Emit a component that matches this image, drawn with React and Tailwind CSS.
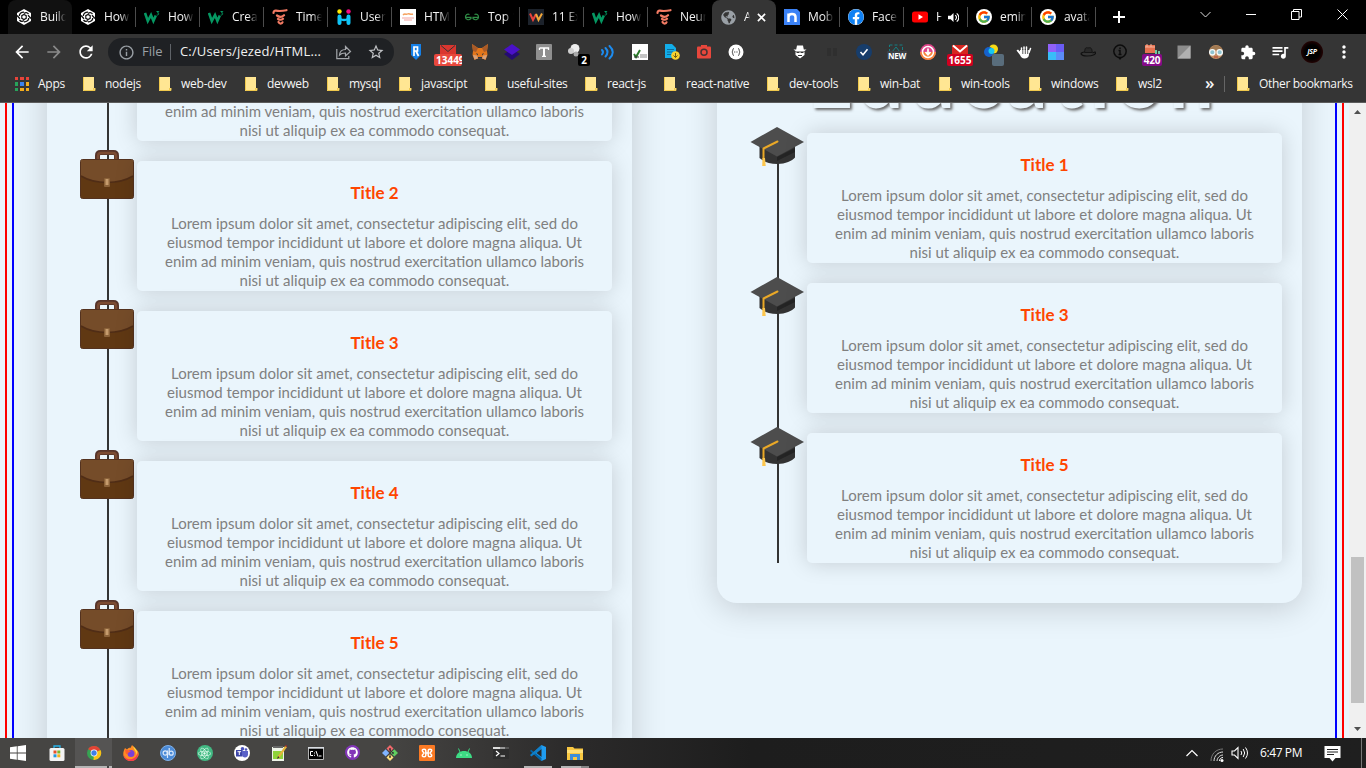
import React from "react";
import { FcGoogle } from "react-icons/fc";
import { FaReact, FaGithub, FaGlobeAmericas, FaFacebook } from "react-icons/fa";
import { MdExtension, MdQueueMusic, MdRefresh, MdMoreVert, MdArrowBack, MdArrowForward, MdInfoOutline, MdStarBorder } from "react-icons/md";

const Svg = ({ s = 16, box = 16, children, className = "" }) => (
  <svg width={s} height={s} viewBox={`0 0 ${box} ${box}`} fill="none" className={"shrink-0 " + className}>{children}</svg>
);

/* ---------- tab favicons ---------- */
const Knot = () => (
  <Svg>
    <path d="M8 0 15 4v8l-7 4-7-4V4z" fill="#fff" />
    <path d="M8 3.200C5.500 3 3.500 4.500 3.300 7M12.500 5C11 3.200 9.500 3.200 8 4.500M12.700 9c.2 2.300-2 4-4.700 3.800M3.500 11c1.500 1.800 3 1.800 4.500.5M1 6.500l3 3.200M15 9.500l-3-3.200" stroke="#111" strokeWidth="1.300" />
    <path d="M8 5.500l2.200 1.200v2.600L8 10.500 5.800 9.300V6.700z" stroke="#111" strokeWidth="1.200" />
  </Svg>
);
const W3 = () => (
  <Svg>
    <path d="M1 4l2.800 8L7 6l2.400 6 2.400-5.500" stroke="#059862" strokeWidth="2.600" />
    <path d="M12.500 2.500h2.300L13.500 4c2 0 1.500 2.300-.8 2" stroke="#059862" strokeWidth="1" />
  </Svg>
);
const Coral = () => (
  <Svg>
    <path d="M1.500 4c0-2 1-2.500 2.500-2.300 3 .5 6 .5 10.500-.5M5 6.500c2 1.500 5 1.500 7-.3M6 10c2 1 4 .8 5-.3M6.500 13c1 2 3.500 2 4 .3" stroke="#f27a63" strokeWidth="2.200" strokeLinecap="round" />
  </Svg>
);
const Hi = () => (
  <Svg>
    <circle cx="3.500" cy="2.500" r="2.200" fill="#ffe800" /><circle cx="12.500" cy="2.500" r="2.200" fill="#f5097f" />
    <path d="M3.500 7.500v6.500M12.500 7.500v6.500" stroke="#0fc3f5" strokeWidth="4" strokeLinecap="round" /><path d="M4 10c3 1.500 5 1.500 8 0" stroke="#0fc3f5" strokeWidth="2.500" />
  </Svg>
);
const Sheet = () => (
  <Svg><path d="M0 0h16v16H0z" fill="#fff" /><path d="M3 6c2-2 3 0 4.500-1s3 1 5.500 0" stroke="#f5a05c" strokeWidth="1.500" /><path d="M2 9h12M4 11h8" stroke="#f4a3a0" /></Svg>
);
const Geeks = () => (
  <Svg><path d="M5.500 5.500C3.500 4.300 1.500 5.700 1.500 8s3 4 5.500 1.500V8.300H1M10.500 5.500C12.500 4.300 14.500 5.700 14.500 8s-3 4-5.500 1.500V8.300h6" stroke="#2f8d46" strokeWidth="1.200" /></Svg>
);
const Vee = () => (
  <Svg><path d="M0 0h16v16H0z" fill="#1c222b" /><path d="M2 4.500 5 11l3-6" stroke="#e8423b" strokeWidth="2" /><path d="M8 5l2.500 6L14 4.500" stroke="#f0a63a" strokeWidth="2" /></Svg>
);
const Globe = () => <FaGlobeAmericas size={15} color="#9aa0a6" />;
const NIcon = () => (
  <Svg><path d="M0 0h13l3 3v13H0z" fill="#3b82f6" /><path d="M4.500 13V4.500M4.500 8c0-4 7-4 7 0v5" stroke="#fff" strokeWidth="2.500" /></Svg>
);
const Face = () => <span className="flex size-4 rounded-full bg-white"><FaFacebook size={16} color="#1081f3" /></span>;
const Tube = () => <Svg><rect y="2.500" width="16" height="11" rx="2.500" fill="#f00" /><path d="M6.500 5.300v5.400L11 8z" fill="#fff" /></Svg>;
const Goog = () => <span className="flex size-4 items-center justify-center rounded-full bg-white"><FcGoogle size={14} /></span>;

const tabs = [
  [Knot, "Build"], [Knot, "How"], [W3, "How"], [W3, "Crea"], [Coral, "Time"], [Hi, "User,"], [Sheet, "HTM"], [Geeks, "Top 1"],
  [Vee, "11 Ex"], [W3, "How"], [Coral, "Neur"], [Globe, "A"], [NIcon, "Mob"], [Face, "Facel"], [Tube, "H"], [Goog, "emin"], [Goog, "avata"],
];

function Tab({ i, Icon, label }) {
  const active = i === 11;
  const sound = i === 14;
  const bg = active ? "bg-[#353535]" : i === 0 ? "bg-[#111111]" : "";
  const sep = i === 0 || i === 10 || i === 11 ? "" : "border-r border-[#4c4c4c]";
  return (
    <div className={`flex h-[34px] w-16 shrink-0 items-center rounded-t-lg ${bg}`}>
      <div className={`flex h-5 w-16 items-center pl-2 ${sep}`}>
        <span className="flex w-4 justify-center"><Icon /></span>
        <span className={`ml-2 overflow-hidden whitespace-nowrap text-[12px] tracking-[-0.1px] text-[#f4f4f4] [mask-image:linear-gradient(90deg,#000_60%,transparent)] ${active || sound ? "w-[6px]" : "w-[26px]"}`}>{label}</span>
        {active && <Svg s={9} box={10} className="ml-[7px]"><path d="M1 1l8 8M9 1L1 9" stroke="#fff" strokeWidth="1.800" /></Svg>}
        {sound && <Svg s={11} box={12} className="ml-[6px]"><path d="M0 4h3l3-3v10L3 8H0z" fill="#fff" /><path d="M8 3.500c1.500 1.500 1.500 3.500 0 5M9.500 1.500c3 2.500 3 6.500 0 9" stroke="#fff" strokeWidth="1.200" /></Svg>}
      </div>
    </div>
  );
}

/* ---------- extension icons ---------- */
const Badge = ({ children, className }) => (
  <span className={`absolute top-[10px] flex h-3 items-center overflow-hidden rounded-[2px] text-[10px] font-bold leading-none text-white ${className}`}>{children}</span>
);
const Mail = ({ bg, n, w }) => (
  <>
    <Svg><path d="M0 1h16v12H0z" fill={bg} /><path d="M1 1.500l7 6 7-6" stroke={bg === "#d9362f" ? "#353535" : "#fff"} strokeWidth={bg === "#d9362f" ? 1 : 2} /></Svg>
    <Badge className={w}>{n}</Badge>
  </>
);
const exts = [
  <Svg><path d="M3 0h10v11l-5 5-5-5z" fill="#1580e8" /><path d="M6 12V3h3.500v4H6M8 7l2.500 5" stroke="#fff" strokeWidth="1.700" /></Svg>,
  <Mail bg="#d9362f" n="13449" w="-left-[6px] w-7 bg-[#e8483d] pl-[2px] text-[10.500px]" />,
  <Svg>
    <path d="M0 0l6 4h4l6-4-1 7 .5 4-2 5-3-1.500H5.500L2.500 16l-2-5L1 7z" fill="#e2761b" /><path d="M0 0l6 4-2 4-3-1zM16 0l-6 4 2 4 3-1z" fill="#a85a28" /><path d="M4 9l2 1-.5 1.500zM12 9l-2 1 .5 1.500zM6 13h4v1.500H6z" fill="#233447" /><path d="M1 11l4 .5 1 3-3.500 1zM15 11l-4 .5-1 3 3.500 1z" fill="#d7a078" />
  </Svg>,
  <Svg><path d="M8 5l8 5-8 6-8-6z" fill="#240b73" /><path d="M8 0l8 5.500L8 11 0 5.500z" fill="#4a11c9" /></Svg>,
  <Svg><rect width="16" height="16" rx="1" fill="#8f8f8f" /><path d="M3.500 4h9v2M3.500 4v2M8 4v8M6 12.300h4" stroke="#fff" strokeWidth="1.300" /><path d="M8 4v8" stroke="#fff" strokeWidth="2" /></Svg>,
  <><Svg><circle cx="7" cy="4.500" r="4.500" fill="#eee" /><circle cx="3" cy="7" r="3" fill="#d0d0d0" /><circle cx="8" cy="10" r="2.500" fill="#aaa" /></Svg><Badge className="left-[10px] w-3 justify-center bg-black">2</Badge></>,
  <Svg><path d="M2 6q2 2 0 4.500M5.500 4q4 4 0 8.500M9.500 2q6.500 6 0 12.500" stroke="#1c8cf0" strokeWidth="2" strokeLinecap="round" /></Svg>,
  <Svg><path d="M0 0h16v16H0z" fill="#fff" /><path d="M8 10h7v4H8z" fill="#c4c4c4" /><path d="M2 10l2 3 4-7" stroke="#2b7a2b" strokeWidth="2" /><path d="M2 13h5" stroke="#333" /></Svg>,
  <Svg><path d="M1 0h7l4 4v10H1z" fill="#12aeea" /><path d="M3 5.500h7M3 8h6M3 10.500h4" stroke="#0b6c9c" /><circle cx="11.500" cy="11.500" r="4.300" fill="#f8d12d" /><path d="M11.500 9v4.500m-2-2l2 2 2-2" stroke="#6d5d12" /></Svg>,
  <Svg><rect x="1" y="2.500" width="14" height="12" rx="1" fill="#e8473c" /><path d="M5 1h6v2H5z" fill="#e8473c" /><circle cx="8" cy="8.300" r="3" stroke="#463333" strokeWidth="1.500" /></Svg>,
  <Svg><circle cx="8" cy="8" r="7.500" fill="#fff" /><path d="M6 4.500c-2 0-.5 2.500-2 3.500 1.500 1 0 3.500 2 3.500M10 4.500c2 0 .5 2.500 2 3.500-1.500 1 0 3.500-2 3.500" stroke="#555" /><path d="M6 8h4" stroke="#555" strokeDasharray="1 .7" /></Svg>,
  <span />,
  <Svg><path d="M5 1.500h6l.8 4h2.700L12.500 7h-9L1.500 5.500h2.700z" fill="#fff" /><path d="M3.500 7.500h9V11L8 14.500 3.500 11z" fill="#fff" /><path d="M4.500 8.500h3M8.500 8.500h3M6 11.500h4" stroke="#333" /></Svg>,
  <Svg><path d="M3 4h4v8H3zM9 4h4v8H9z" fill="#2f2f2f" /></Svg>,
  <Svg><circle cx="8" cy="8" r="8" fill="#173d6b" /><path d="M4.500 8l2.500 2.700L11.500 5.300" stroke="#fff" strokeWidth="1.600" /></Svg>,
  <><Svg><rect x="1.500" y="1" width="13" height="8" stroke="#167f83" strokeDasharray="3 2" /><path d="M4 8l4-5 4 5" stroke="#167f83" /></Svg><span className="absolute -left-px top-[7px] bg-[#3c4146] px-px text-[8px] font-bold leading-[9px] tracking-[-0.3px] text-white">NEW</span></>,
  <Svg><circle cx="8" cy="8" r="7.900" fill="#e0458a" /><path d="M0 8a8 8 0 0 0 16 0" fill="#f7853d" /><circle cx="8" cy="8" r="5.500" stroke="#fff" strokeWidth="1.500" /><path d="M8 4.500v5.500m-2.500-2L8 10.700 10.500 8" stroke="#fff" strokeWidth="1.700" /></Svg>,
  <Mail bg="#d6251f" n="1655" w="-left-[5px] w-[26px] justify-center bg-[#d1001f]" />,
  <><Svg><circle cx="9.500" cy="5" r="4.500" fill="#f7da15" /><circle cx="5" cy="8" r="5" fill="#1662cc" /><circle cx="7.500" cy="7" r="3" fill="#17c9ef" /></Svg><span className="absolute left-2 top-[10px] size-3 rounded-[2px] bg-[#596d7c]" /></>,
  <Svg><path d="M4 6h9v4.500c0 2.500-2 4-4.500 4S5 13 4 11L.5 6.500 2 5.500l2 2z" fill="#fff" /><path d="M5.500 8V4M8 7V3M10.500 7V3M13 8.500l1.500-4" stroke="#fff" strokeWidth="1.500" strokeLinecap="round" /><path d="M6.800 5v5M9.300 5v5M11.700 5.500V10" stroke="#333" strokeWidth=".8" /></Svg>,
  <Svg><path d="M0 0h8v8H0z" fill="#9061f9" /><path d="M8 0h8v8H8z" fill="#6a5cf5" /><path d="M0 8h8v8H0z" fill="#38bdf8" /><path d="M8 8h8v8H8z" fill="#5b8cf8" /></Svg>,
  <Svg><path d="M4.500 8.500C5 3 6 3.500 8 4c2-.5 4-1 4.200 4.500z" fill="#292929" stroke="#151515" /><path d="M4 8C-1 9 1 12 7 12s10-2 8-4l-2.500 1" stroke="#111" strokeWidth="1.200" /></Svg>,
  <Svg><circle cx="8" cy="7.300" r="6.200" stroke="#0c0c0c" strokeWidth="1.500" /><path d="M5.500 13L8 16l2.500-3z" fill="#0c0c0c" /><path d="M6.500 6.500H8v4M6.500 10.500h3M8 3.500V5" stroke="#0c0c0c" strokeWidth="1.400" /></Svg>,
  <><Svg><path d="M1 1h10v8H1z" fill="#e7714f" /><path d="M1 3h10M3 0v3m4-3v3" stroke="#f7b69e" /><path d="M11 6h2v4h-2zM14 7h2v3h-2z" fill="#6cc7a1" /></Svg><Badge className="-left-[2px] w-5 justify-center bg-[#850b88] tracking-[-0.2px]">420</Badge></>,
  <Svg><path d="M1.500 1.500h13v13h-13z" fill="#8c8c8c" /><path d="M14.500 1.500v13h-13z" fill="#b1b1b1" /></Svg>,
  <Svg><circle cx="8" cy="8" r="7" fill="#c48f63" /><path d="M1.500 6C3 0 13 0 14.500 6z" fill="#a17a53" /><circle cx="4.300" cy="8.300" r="2.700" fill="#8fc4d0" stroke="#f4f7f7" strokeWidth="1.300" /><circle cx="11.700" cy="8.300" r="2.700" fill="#8fc4d0" stroke="#f4f7f7" strokeWidth="1.300" /><path d="M6 13h4" stroke="#b13e36" /></Svg>,
  <MdExtension size={17} color="#fff" />,
  <MdQueueMusic size={20} color="#fff" className="shrink-0" />,
  <span className="flex size-[22px] shrink-0 items-center justify-center rounded-full bg-[radial-gradient(circle,#000_45%,#4a0606)] text-[7px] font-bold italic tracking-[-0.3px] text-white">JSP</span>,
  <MdMoreVert size={20} color="#fff" className="shrink-0" />,
];

/* ---------- bookmarks ---------- */
const Folder = () => (
  <Svg><path d="M2 1h11v11h1v3H2z" fill="#ffe693" /><path d="M2.500 1v13.500H14V12M12.500 14V12" stroke="#f0c94d" /></Svg>
);
const bookmarks = [
  ["nodejs", "w-[76px]"], ["web-dev", "w-[86px]"], ["devweb", "w-[82px]"], ["mysql", "w-[72px]"], ["javascipt", "w-[86px]"],
  ["useful-sites", "w-[100px]"], ["react-js", "w-[79px]"], ["react-native", "w-[103px]"], ["dev-tools", "w-[91px]"],
  ["win-bat", "w-[81px]"], ["win-tools", "w-[90px]"], ["windows", "w-[87px]"], ["wsl2", "w-[91px]"],
];
const appColors = ["#e8443a", "#e8443a", "#e8443a", "#28a35b", "#3c83ee", "#f4ad1d", "#28a35b", "#f4ad1d", "#f4ad1d"];

function Browser() {
  return (
    <header className="h-[103px] shrink-0 border-b border-[#5c5c5c] bg-[#353535]">
      <div className="flex h-[34px] bg-black pl-2">
        {tabs.map(([Icon, label], i) => <Tab key={i} i={i} Icon={Icon} label={label} />)}
        <div className="flex flex-1 items-center pl-[17px]">
          <Svg s={12} box={12}><path d="M6 0v12M0 6h12" stroke="#fff" strokeWidth="2" /></Svg>
        </div>
        <div className="mr-[18px] flex h-7 items-center gap-[35px]">
          <Svg s={11} box={11}><path d="M.5 3l5 5 5-5" stroke="#ddd" /></Svg>
          <Svg s={10} box={10}><path d="M0 5.500h10" stroke="#fff" /></Svg>
          <Svg s={11} box={11}><path d="M.5 2.500h7.500v8H.5zM2.500 2.500v-2h8v7.500H8" stroke="#fff" /></Svg>
          <Svg s={11} box={11}><path d="M.5.5l10 10M10.500.5l-10 10" stroke="#fff" /></Svg>
        </div>
      </div>
      <div className="flex h-9 items-center">
        <div className="flex w-[108px] shrink-0 items-center gap-[12px] pl-3">
          <MdArrowBack size={20} color="#fff" /><MdArrowForward size={20} color="#8a8a8a" /><MdRefresh size={20} color="#fff" />
        </div>
        <div className="flex h-7 w-[286px] shrink-0 items-center rounded-full bg-[#1f2124] pl-[10px] text-[13px]">
          <MdInfoOutline size={17} color="#9aa0a6" />
          <span className="ml-[7px] w-[28px] text-[#9aa0a6]">File</span>
          <span className="mr-[9px] h-4 w-px bg-[#5f6368]" />
          <span className="w-[142px] whitespace-nowrap tracking-[0.15px] text-[#f1f1f1]">C:/Users/jezed/HTML...</span>
          <Svg className="ml-[14px]"><path d="M.8 5v9.700h12V12" stroke="#a4a7ab" strokeWidth="1.200" /><path d="M3.500 11c.3-4 3-5.500 6-5.500V2.500l5 5-5 4.500V9C7 9 5 9.300 3.500 11z" stroke="#a4a7ab" strokeWidth="1.200" /></Svg>
          <MdStarBorder size={18} color="#c0c2c5" className="ml-[15px]" />
        </div>
        <div className="ml-[6px] flex">
          {exts.map((e, i) => (
            <div key={i} className="flex w-8 justify-center"><div className="relative flex size-4 items-center justify-center">{e}</div></div>
          ))}
        </div>
      </div>
      <div className="flex h-7 items-center text-[12px] text-[#f6f6f6]">
        <div className="flex w-[81px] items-center pl-[15px]">
          <div className="grid grid-cols-3 gap-[2px]">{appColors.map((c, i) => <i key={i} className="size-[3.300px]" style={{ background: c }} />)}</div>
          <span className="ml-[9px] tracking-[-0.2px]">Apps</span>
        </div>
        {bookmarks.map(([t, w]) => (
          <div key={t} className={`flex shrink-0 items-center ${w}`}><Folder /><span className="ml-2 whitespace-nowrap tracking-[-0.25px]">{t}</span></div>
        ))}
        <span className="w-[19px] pb-[3px] text-[17px] font-semibold leading-none">»</span>
        <span className="mr-[10px] h-4 w-px shrink-0 bg-[#666]" />
        <Folder /><span className="ml-2 whitespace-nowrap tracking-[-0.33px]">Other bookmarks</span>
      </div>
    </header>
  );
}

/* ---------- timelines ---------- */
const Briefcase = () => (
  <svg width="56" height="52" viewBox="0 0 56 52" fill="none">
    <path d="M18.500 10V5.500q0-3 3-3h13q3 0 3 3V10" stroke="#56342a" strokeWidth="5" />
    <path d="M19 10V6q0-3 3-3h12q3 0 3 3v4" stroke="#7b4b32" strokeWidth="2.500" />
    <rect x="1.500" y="9.500" width="53" height="39" rx="2" fill="#603813" stroke="#54321f" />
    <path d="M2 10h52v16C40 34.500 16 34.500 2 26z" fill="#754c29" />
    <path d="M2 26c14 8.500 38 8.500 52 0" stroke="#502d16" strokeWidth="1.500" />
    <rect x="25" y="28" width="6" height="9" rx="1" fill="#8b6239" /><path d="M26.500 29h3v6h-3z" fill="#c69c6d" />
  </svg>
);
const Cap = () => (
  <svg width="56" height="42" viewBox="0 0 56 42" fill="none">
    <path d="M10.500 19v13c4 3.500 10 6 18 6S43 35 46 31.500V19L28 12z" fill="#333" />
    <path d="M28 31l18-9v4L28 35z" fill="#242424" />
    <path d="M1.500 16L28 1l27 15-27 14.500z" fill="#4d4d4d" />
    <path d="M28.500 15.500L14.500 22.500V33" stroke="#e9a827" strokeWidth="2" strokeLinejoin="round" strokeLinecap="round" />
    <path d="M13.500 32h2.500l.7 8h-3.500z" fill="#fcc64d" />
  </svg>
);

function Item({ title, cap, last }) {
  return (
    <div className={`grid grid-cols-[60px_475px] ${last ? "h-[130px]" : "h-[150px]"}`}>
      <div className="col-start-1 row-start-1 ml-[30px] w-[2px] bg-[#333]" />
      <div className={`col-start-1 row-start-1 ml-[2px] ${cap ? "-mt-[7px]" : "-mt-[11px]"}`}>{cap ? <Cap /> : <Briefcase />}</div>
      <div className="col-start-2 row-start-1 h-[130px] rounded-[5px] bg-[#eaf5fc] pt-[21px] text-center font-[Lato,sans-serif] shadow-[0_0_22px_rgba(0,0,0,0.17)]">
        <h3 className="text-[17px] font-bold leading-[22px] text-[#ff4500]">{title}</h3>
        <p className="mt-[10px] whitespace-nowrap text-[15px] leading-[19px] text-[#808080]">
          Lorem ipsum dolor sit amet, consectetur adipiscing elit, sed do<br />
          eiusmod tempor incididunt ut labore et dolore magna aliqua. Ut<br />
          enim ad minim veniam, quis nostrud exercitation ullamco laboris<br />
          nisi ut aliquip ex ea commodo consequat.
        </p>
      </div>
    </div>
  );
}

function Page() {
  return (
    <div className="flex min-h-0 flex-1 bg-[#eaf5fc]">
      <div className="ml-[5px] flex flex-1 overflow-hidden border-x-2 border-[#ff0000] px-[5px]">
        <div className="flex flex-1 items-start border-x-2 border-[#0000ff]">
          <section className="-mt-[92px] ml-[33px] h-[800px] w-[585px] shrink-0 bg-[#eaf5fc] pl-[30px] shadow-[0_5px_32px_rgba(0,0,0,0.17)]">
            {[1, 2, 3, 4, 5].map((n) => <Item key={n} title={`Title ${n}`} />)}
          </section>
          <section className="-mt-[92px] ml-[85px] h-[592px] w-[585px] shrink-0 rounded-[20px] bg-[#eaf5fc] pl-[30px] shadow-[0_5px_32px_rgba(0,0,0,0.17)]">
            <h2 className="h-[122px] w-[555px] pl-[60px] pt-[18px] font-[Lato,sans-serif] text-[80px] font-bold leading-[96px] tracking-[6.500px] text-[#eaf5fc] [text-shadow:2px_2px_3px_#666]">Education</h2>
            <Item cap title="Title 1" />
            <Item cap title="Title 3" />
            <Item cap last title="Title 5" />
          </section>
        </div>
      </div>
      <div className="ml-[5px] flex w-[17px] shrink-0 flex-col items-center bg-[#f0f0f0] pt-[6px]">
        <Svg s={7} box={7}><path d="M0 5l3.500-4L7 5z" fill="#505050" /></Svg>
        <div className="mt-[441px] h-[146px] w-[13px] bg-[#c1c1c1]" />
        <Svg s={7} box={7} className="mt-[23px]"><path d="M0 1l3.500 4L7 1z" fill="#505050" /></Svg>
      </div>
    </div>
  );
}

/* ---------- taskbar ---------- */
const apps = [
  <Svg><path d="M0 2.300l6.800-1v6.300H0zM7.600 1.200L16 0v7.600H7.600zM0 8.400h6.800v6.300l-6.800-1zM7.600 8.400H16V16l-8.400-1.200z" fill="#fff" /></Svg>,
  <Svg><path d="M5 4V1h6v3" stroke="#27b3ea" strokeWidth="1.300" /><rect x=".5" y="3" width="15" height="13" rx="1.500" fill="#f4f4f4" /><path d="M4.500 5.500h3v3h-3z" fill="#e8502a" /><path d="M8.300 5.500h3v3h-3z" fill="#7bb529" /><path d="M4.500 9.300h3v3h-3z" fill="#2399df" /><path d="M8.300 9.300h3v3h-3z" fill="#f5b31c" /></Svg>,
  <Svg><circle cx="8" cy="8" r="7" fill="#36a352" /><path d="M8 8L2 4.300A7 7 0 0 1 14.300 5z" fill="#e34335" /><path d="M8 8l6.500-3A7 7 0 0 1 7.500 15z" fill="#fac116" /><path d="M2 4.300L5.500 10 8 8z" fill="#36a352" /><circle cx="8" cy="8" r="3.400" fill="#fff" /><circle cx="8" cy="8" r="2.700" fill="#3f7ee8" /></Svg>,
  <Svg><path d="M2 3l2 1.500C6 2 7 4 8 2l1-2c1 1 2 2 3.500 4C16 6 16 9 15.500 10.500 14 14 11 16 8 16S1 14 .3 10C0 7 1 5 2 3z" fill="#ff8b24" /><path d="M.5 8C1 14 6 15 9 14s5-3 6-7c.5 4-1 9-7 9S.5 12 .5 8z" fill="#f8384f" /><circle cx="8" cy="8.500" r="3.500" fill="#7a3fd8" /><path d="M2 5c3-1 4 1 6 1-1 1.500-3 1-3 2.500L3 9z" fill="#ff5d2e" /><path d="M10 1c3 3 5 5 4 9-1-4-3-5-4-9z" fill="#ffd83d" /></Svg>,
  <Svg><circle cx="8" cy="8" r="7.500" fill="#4b8ad6" stroke="#7fb0e8" /><circle cx="5.200" cy="8" r="2.100" stroke="#dce9fa" strokeWidth="1.200" /><path d="M7.500 5.500V13M9.200 3v7" stroke="#dce9fa" strokeWidth="1.200" /><circle cx="11.200" cy="8.200" r="2" stroke="#dce9fa" strokeWidth="1.200" /></Svg>,
  <span className="flex size-4 items-center justify-center rounded-full bg-[#42b983]"><FaReact size={13} color="#e9fff3" /></span>,
  <Svg><circle cx="8" cy="8" r="8" fill="#fff" /><circle cx="8.500" cy="3.800" r="1.800" fill="#4b53bc" /><circle cx="12" cy="4.500" r="1.300" fill="#4b53bc" /><path d="M2 5h6.500v6.500H2z" fill="#3d45a8" /><path d="M8 6h6v3.500c0 4-6 4-6 0z" fill="#5b62c8" /><path d="M3.500 6.700h3.600M5.300 6.700V10" stroke="#fff" /></Svg>,
  <Svg><path d="M1 2h12v14H1z" fill="#eef3e8" /><path d="M2 6h10v8H2z" fill="#8fd33c" /><path d="M2 1h10v2H2z" fill="#666" /><path d="M14 1L7 11l-1 3 2.500-1.500L16 2z" fill="#e5b53a" /><path d="M14 1l1-1 1 1-.5 1z" fill="#b52525" /><path d="M6 14l1-3 1.500 1.500z" fill="#333" /></Svg>,
  <Svg><path d="M.5 2.500h15v12H.5z" fill="#000" stroke="#b4b4b4" /><path d="M0 2h16v1.700H0z" fill="#d9dde2" /><path d="M5 6.500H2.500v4H5M6.500 7.500v1m0 1.300v1M8 6l2 5.500M11 11h2.500" stroke="#fff" /></Svg>,
  <span className="flex size-[15px] items-center justify-center rounded-full bg-[#8235b8]"><FaGithub size={11} color="#fff" /></span>,
  <Svg><path d="M8 0l3.500 3.500L8 7 4.500 3.500z" fill="#f0696b" /><path d="M3.700 4.300L7.200 8l-3.500 3.500L0 8z" fill="#80b3ff" /><path d="M12.300 4.300L16 8l-3.700 3.500L8.800 8z" fill="#60cf60" /><path d="M8 9l3.500 3.500L8 16l-3.500-3.500z" fill="#ffe180" /><path d="M8 4v8m0-7l3 3" stroke="#393636" strokeWidth="1" /><circle cx="8" cy="4" r=".9" fill="#333" /><circle cx="11" cy="8" r=".9" fill="#333" /><circle cx="8" cy="12" r=".9" fill="#333" /></Svg>,
  <Svg><rect width="16" height="16" rx="1" fill="#fb7a24" /><path d="M5.200 4.200q-2.500 0-1.700 2L5 8 3.500 9.800q-.8 2 1.700 2 1.600 0 1.600-1.600V5.800q0-1.600-1.600-1.600zM10.800 4.200q2.500 0 1.700 2L11 8l1.500 1.800q.8 2-1.700 2-1.600 0-1.600-1.600V5.800q0-1.600 1.600-1.600zM6.500 8h3" stroke="#fff" strokeWidth="1.500" /></Svg>,
  <Svg><path d="M0 13C0 3.500 16 3.500 16 13z" fill="#3ddc84" /><path d="M4 7L2.500 3.500M12 7l1.500-3.500" stroke="#3ddc84" /><path d="M4.500 9.500h1v1h-1zM10.500 9.500h1v1h-1z" fill="#fff" /></Svg>,
  <Svg><path d="M0 2h16v12H0z" fill="#2d2d2d" /><path d="M0 2h7v2H0z" fill="#ddd" /><path d="M7 2h5v2H7z" fill="#999" /><path d="M12 2h4v2h-4z" fill="#555" /><path d="M3 6l3 2.500L3 11M7.500 11H12" stroke="#fff" strokeWidth="1.200" /></Svg>,
  <Svg><path d="M11.500 0L16 2v12l-4.500 2L3 8z" fill="#1f9cf0" /><path d="M1.200 4.800L11.500 13v3L0 6z" fill="#0065a9" /><path d="M0 10L11.500 0v4L1.300 11.500z" fill="#0f7fc9" /><path d="M6.500 8l5-4v8z" fill="#24292e" /></Svg>,
  <Svg><path d="M0 2h6l1.500 1.500H16V15H0z" fill="#f9c842" /><path d="M0 5h16v3H0z" fill="#ffdf78" /><path d="M3 15V9h10v6h-3v-3H6v3z" fill="#3c8ddb" /></Svg>,
];

function Taskbar() {
  return (
    <footer className="flex h-[30px] shrink-0 items-center bg-[linear-gradient(90deg,#464543_0%,#464543_28%,#2b2a2a_42%,#1d1d1d_55%,#1f1f1f_100%)]">
      {apps.map((a, i) => (
        <div key={i} className={`flex h-[30px] shrink-0 flex-col items-center justify-between pt-[7px] ${i === 0 ? "mr-[2px] w-9" : "w-[37px]"} ${i === 2 ? "bg-[#555453]" : ""}`}>
          {a}
          {i === 2 && <span className="flex h-[2px] w-full bg-[#b5b5b5]"><i className="ml-[32px] w-[2px] bg-[#444]" /></span>}
          {i > 13 && <span className="flex h-[2px] w-7 bg-[#b5b5b5]">{i === 15 && <i className="ml-5 w-2 bg-[#858585]" />}</span>}
        </div>
      ))}
      <div className="flex flex-1 items-center justify-end text-[12px] text-white">
        <Svg s={12} box={12}><path d="M.5 9L6 3.500 11.500 9" stroke="#fff" strokeWidth="1.200" /></Svg>
        <Svg s={14} box={14} className="ml-[12px] mt-1"><path d="M1 13C1 6 6 1 13 1" stroke="#777" /><path d="M4 13c0-5 4-9 9-9M7 13c0-3 3-6 6-6" stroke="#ddd" /><path d="M9.500 13C9.500 11 11 9.500 13 9.500" stroke="#fff" /><circle cx="12" cy="12.500" r="1.500" fill="#fff" /></Svg>
        <Svg s={18} box={18} className="ml-[7px]"><path d="M1 7h2.500L7 3.500v11L3.500 11H1z" stroke="#fff" strokeWidth="1.100" /><path d="M10 7q1.500 2 0 4M12.200 5q3 4 0 8M14.500 3.500q4 5.500 0 11" stroke="#fff" /></Svg>
        <span className="ml-[11px] w-[43px] whitespace-nowrap tracking-[-0.4px]">6:47 PM</span>
        <Svg s={17} box={17} className="ml-[21px] mr-[20px]"><path d="M.5 1h16v12h-5L8.500 16.500 5.500 13h-5z" fill="#fff" /><path d="M3 4.500h11M3 7h11M3 9.500h7" stroke="#222" /></Svg>
        <span className="mr-1 h-[30px] w-px bg-[#777]" />
      </div>
    </footer>
  );
}

export default function App() {
  return (
    <div className="flex h-[768px] w-[1366px] flex-col overflow-hidden font-['Open_Sans',sans-serif]">
      <Browser />
      <Page />
      <Taskbar />
    </div>
  );
}
